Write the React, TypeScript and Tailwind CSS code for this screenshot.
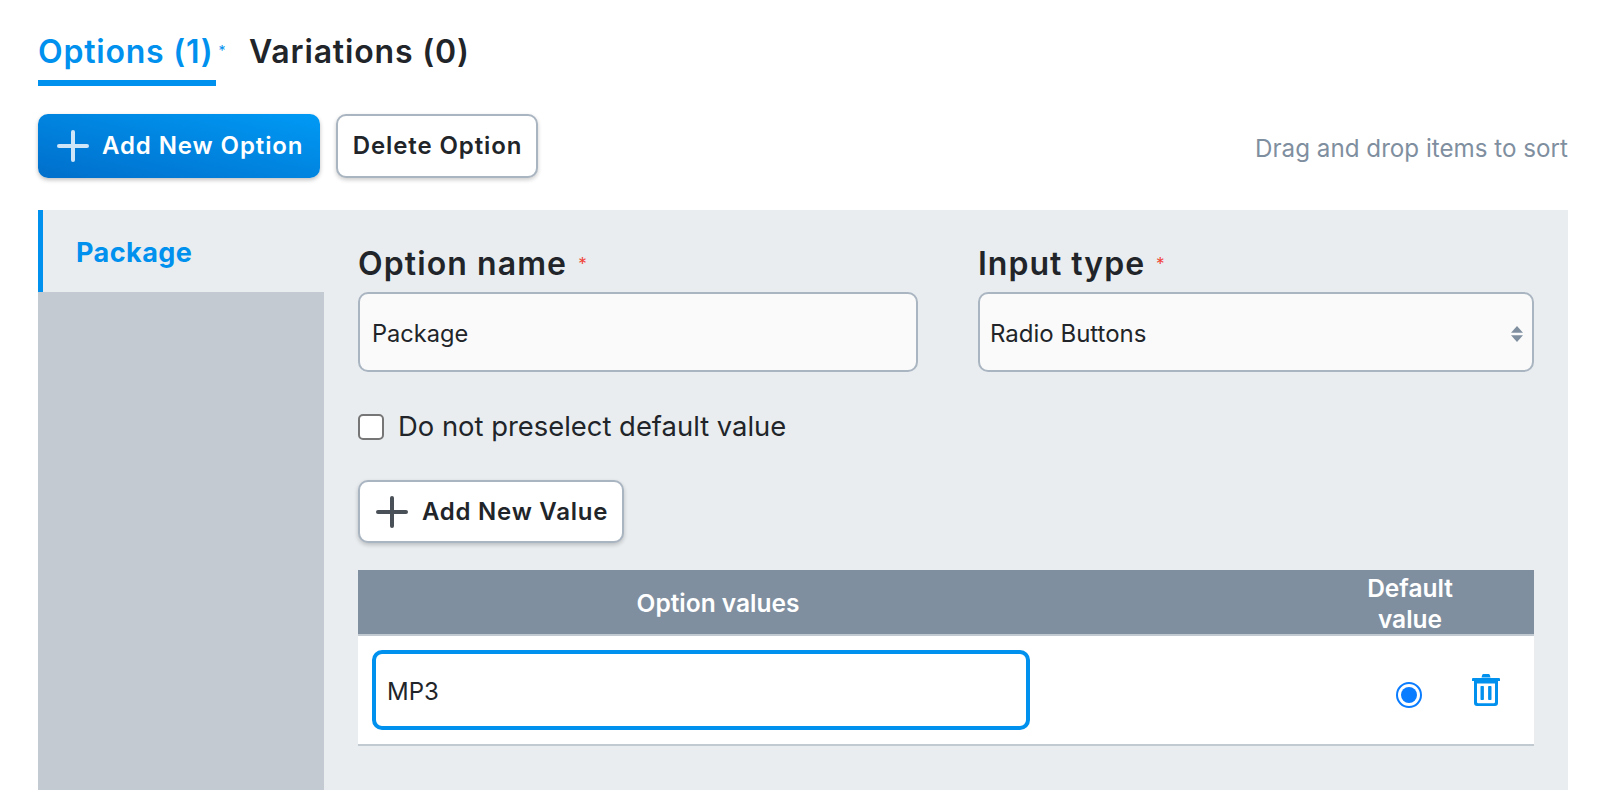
import { Plus } from "lucide-react";

function Req() {
  return <span className="relative top-[5px] ml-[11px] align-top text-[17px] leading-[28px] font-normal tracking-normal text-[#f04438]">*</span>;
}

function TrashIcon() {
  return (
    <svg width="30" height="32" viewBox="0 0 30 32" fill="#0090ee">
      <path d="M10.5 3.5 L11.2 1 Q11.4 0 12.5 0 H17.5 Q18.6 0 18.8 1 L19.5 3.5 Z" />
      <path d="M2 4 H28 Q29 4 29 5 V7 H1 V5 Q1 4 2 4 Z" />
      <path
        fillRule="evenodd"
        d="M3 7 H27 V29 Q27 32 24 32 H6 Q3 32 3 29 Z M6 9.5 V28 Q6 29.3 7.3 29.3 H22.7 Q24 29.3 24 28 V9.5 Z"
      />
      <rect x="9.5" y="12" width="3.4" height="14" rx="0.8" />
      <rect x="17.1" y="12" width="3.4" height="14" rx="0.8" />
    </svg>
  );
}

export default function App() {
  return (
    <div className="h-[790px] w-[1604px] overflow-hidden bg-white pr-[36px] pl-[38px] font-['Inter',sans-serif] text-[#212529]">
      <div className="flex h-[86px] items-start gap-[33px]">
        <div className="h-full w-[178px] border-b-[6px] border-[#0090ee] pt-[32px]">
          <span className="text-[32px] leading-[40px] font-semibold tracking-[0.8px] whitespace-nowrap text-[#0090ee]">
            Options (1)<sup className="ml-[5px] text-[14px] font-normal tracking-normal">*</sup>
          </span>
        </div>
        <div className="pt-[32px]">
          <span className="text-[32px] leading-[40px] font-semibold tracking-[0.85px] whitespace-nowrap">Variations (0)</span>
        </div>
      </div>

      <div className="mt-[28px] flex h-[64px] items-center gap-[16px]">
        <button className="flex h-[64px] w-[282px] items-center gap-[5px] rounded-[10px] bg-gradient-to-tr from-[#006fcb] to-[#009af5] pl-[11px] text-[24px] font-semibold tracking-[0.9px] text-white shadow-[0_2px_4px_rgba(0,0,0,0.25)]">
          <Plus size={48} strokeWidth={2} className="text-[#cfe6f9]" />
          Add New Option
        </button>
        <button className="h-[64px] w-[202px] rounded-[10px] border-2 border-[#aab5c2] bg-white pl-px text-[24px] font-semibold tracking-[0.9px] shadow-[0_2px_4px_rgba(0,0,0,0.2)]">
          Delete Option
        </button>
        <span className="mt-[6px] ml-auto text-[24.2px] text-[#7f8fa0]">Drag and drop items to sort</span>
      </div>

      <div className="mt-[32px] flex h-[580px] bg-[#e9edf0]">
        <div className="w-[286px] shrink-0 bg-[#c3cad2]">
          <div className="flex h-[82px] items-start border-l-[5px] border-[#0090ee] bg-[#e9edf0] pt-[27px] pl-[33px] text-[27px] leading-[32px] font-bold tracking-[0.45px] text-[#0090ee]">
            Package
          </div>
        </div>

        <div className="flex-1 pt-[35px] pr-[34px] pl-[34px]">
          <div className="flex gap-[60px]">
            <div className="w-[560px]">
              <div className="text-[32px] leading-[38px] font-semibold tracking-[1.1px]">
                Option name
                <Req />
              </div>
              <div className="mt-[9px] flex h-[80px] items-center rounded-[10px] border-2 border-[#aab5c2] bg-[#fafafa] pt-[4px] pl-[12px] text-[23.6px]">
                Package
              </div>
            </div>
            <div className="w-[556px]">
              <div className="text-[32px] leading-[38px] font-semibold tracking-[1px]">
                Input type
                <Req />
              </div>
              <div className="mt-[9px] flex h-[80px] items-center justify-between rounded-[10px] border-2 border-[#aab5c2] bg-[#fafafa] pt-[4px] pr-[9px] pl-[10px] text-[24px]">
                Radio Buttons
                <svg width="12" height="16" viewBox="0 0 12 16" fill="#7f8fa0">
                  <path d="M6 0 L12 6.8 H0 Z" />
                  <path d="M6 16 L12 9.2 H0 Z" />
                </svg>
              </div>
            </div>
          </div>

          <label className="mt-[37px] flex h-[36px] items-center gap-[14px] text-[27.4px]">
            <span className="h-[26px] w-[26px] rounded-[5px] border-2 border-[#767676] bg-white" />
            Do not preselect default value
          </label>

          <button className="mt-[35px] flex h-[63px] w-[266px] items-center gap-[6px] rounded-[10px] border-2 border-[#aab5c2] bg-white pl-[8px] text-[24px] font-semibold tracking-[0.75px] shadow-[0_2px_4px_rgba(0,0,0,0.2)]">
            <Plus size={48} strokeWidth={2} className="text-[#4a5058]" />
            Add New Value
          </button>

          <div className="mt-[27px] w-[1176px]">
            <div className="flex h-[66px] items-center border-b-2 border-[#c2cad1] bg-[#7f8fa0] pt-[3px] text-[24.5px] leading-[30.5px] font-semibold text-white">
              <div className="w-[720px] text-center">Option values</div>
              <div className="ml-[272px] w-[120px] text-center">
                Default
                <br />
                value
              </div>
            </div>
            <div className="flex h-[110px] items-center border-b-2 border-[#c2cad1] bg-white pl-[14px]">
              <div className="flex h-[80px] w-[658px] items-center rounded-[10px] border-4 border-[#0090ee] bg-white pt-[4px] pl-[11px] text-[24px]">
                MP3
              </div>
              <span className="mt-[10px] ml-[366px] flex h-[26px] w-[26px] items-center justify-center rounded-full border-2 border-[#0a7cff]">
                <span className="h-4 w-4 rounded-full bg-[#0a7cff]" />
              </span>
              <span className="ml-[49px]">
                <TrashIcon />
              </span>
            </div>
          </div>
        </div>
      </div>
    </div>
  );
}
